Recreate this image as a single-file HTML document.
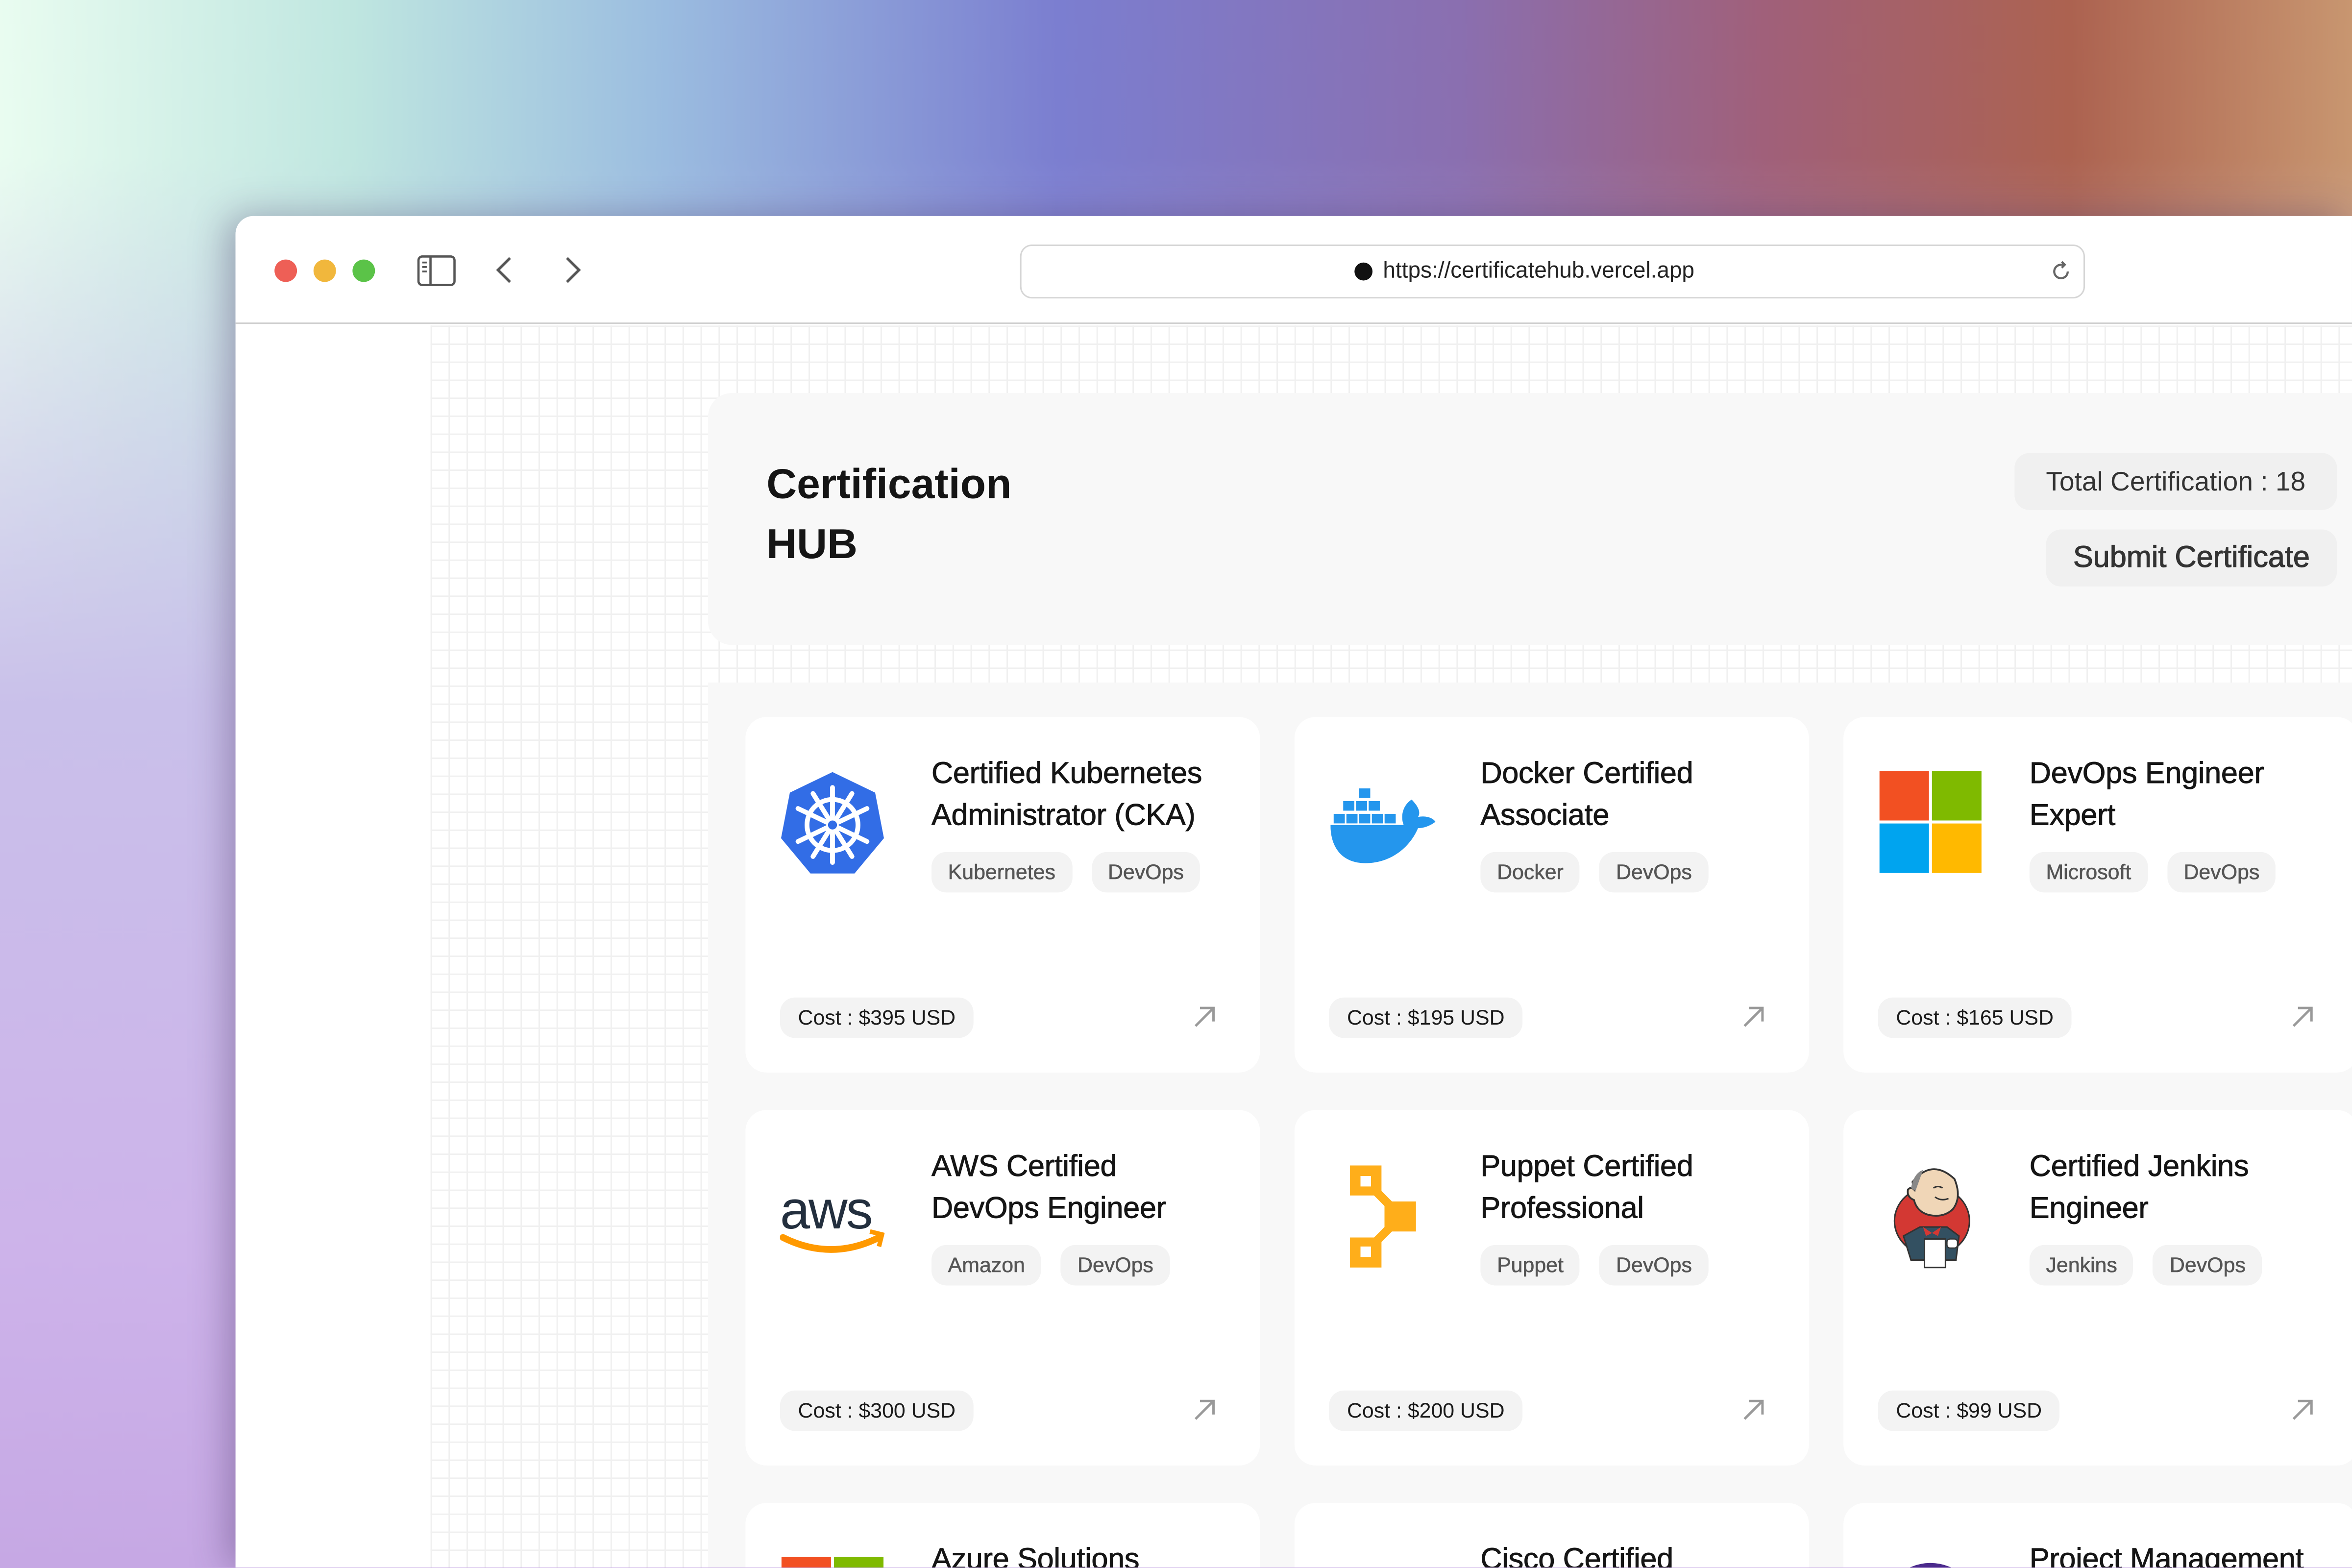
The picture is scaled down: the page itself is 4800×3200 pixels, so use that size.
<!DOCTYPE html>
<html><head><meta charset="utf-8">
<style>
*{margin:0;padding:0;box-sizing:border-box}
html,body{width:4800px;height:3200px;overflow:hidden}
body{position:relative;font-family:"Liberation Sans",sans-serif;
background:linear-gradient(90deg,#e9fcf0 0%,#bfe6e0 15%,#9bbde0 28%,#7b7ed0 45%,#8a6fb0 62%,#a0607a 75%,#ac6250 88%,#c89670 100%);}
#bg2{position:absolute;left:0;top:0;width:4800px;height:3200px;background:linear-gradient(180deg,rgba(0,0,0,0) 0%,rgba(0,0,0,0) 10%,#c9c0ea 45%,#cdb3ea 80%,#c6a8e4 100%);}
#s{position:absolute;left:0;top:0;width:1568px;height:1045px;transform:scale(3.0612);transform-origin:0 0;overflow:hidden}
.win{position:absolute;left:157px;top:144px;width:1411px;height:901px;background:#fff;border-top-left-radius:12px;box-shadow:-6px 0 24px rgba(60,40,90,.35);overflow:hidden}
.tl{position:absolute;top:29px;width:15px;height:15px;border-radius:50%}
.tb{position:absolute;left:0;top:0;width:100%;height:72px;border-bottom:1px solid #cfcfcf;background:#fff}
.url{position:absolute;left:523px;top:19px;width:710px;height:36px;border:1px solid #d6d6d6;border-radius:8px;font-size:15px;color:#222}
.grid{position:absolute;left:130px;top:73px;width:1300px;height:900px;background-color:#fff;
background-image:linear-gradient(#f0f0f0 1px,transparent 1px),linear-gradient(90deg,#f0f0f0 1px,transparent 1px);background-size:12px 12px}
.hdr{position:absolute;left:315px;top:118px;width:1200px;height:168px;background:#f8f8f8;border-radius:16px}
.area{position:absolute;left:315px;top:311px;width:1200px;height:700px;background:#f8f8f8}
.card{position:absolute;width:343px;height:237px;background:#fff;border-radius:14px}
.logo{position:absolute;left:23px;top:35px;width:70px;height:70px}
.t{position:absolute;left:124px;top:24px;font-size:20px;line-height:28px;color:#151515;letter-spacing:-.1px;-webkit-text-stroke:.3px #151515}
.tags{position:absolute;left:124px;top:90px;display:flex;gap:13px}
.tag{background:#f3f3f3;border-radius:10px;height:27px;line-height:27px;padding:0 11px;font-size:14px;color:#555;-webkit-text-stroke:.2px #555}
.cost{position:absolute;left:23px;top:187px;height:27px;line-height:27px;background:#f3f3f3;border-radius:10px;padding:0 12px;font-size:14px;color:#1a1a1a}
.arr{position:absolute;left:298px;top:192px;width:16px;height:16px}
</style></head><body>
<div id="bg2"></div>
<div id="s">
<div class="win">
 <div class="grid"></div>
 <div class="hdr">
  <div style="position:absolute;left:39px;top:41px;font-size:28px;line-height:40px;font-weight:bold;color:#151515">Certification<br>HUB</div>
 </div>
 <div style="position:absolute;left:1186px;top:158px;height:38px;line-height:38px;background:#f0f0f0;border-radius:10px;font-size:18px;color:#333;width:215px;text-align:center">Total Certification : 18</div>
 <div style="position:absolute;left:1207px;top:209px;height:38px;line-height:38px;width:194px;background:#f0f0f0;border-radius:10px;font-size:20px;color:#333;text-align:center;-webkit-text-stroke:.4px #333">Submit Certificate</div>
 <div class="area"></div>

 <!-- row1 -->
 <div class="card" style="left:340px;top:334px">
  <svg class="logo" viewBox="0 0 70 70"><polygon points="35,1 64,15 70,46 50,70 20,70 0,46 6,15" fill="#326de6" transform="translate(35 36) scale(.98) translate(-35 -36)"/>
  <g stroke="#fff" stroke-width="3.2" fill="none" stroke-linecap="round"><circle cx="35" cy="37" r="17"/>
  <line x1="35" y1="12" x2="35" y2="62"/><line x1="12" y1="26" x2="58" y2="48"/><line x1="58" y1="26" x2="12" y2="48"/><line x1="22" y1="58" x2="48" y2="16"/><line x1="48" y1="58" x2="22" y2="16"/></g><circle cx="35" cy="37" r="3" fill="#326de6"/></svg>
  <div class="t">Certified Kubernetes<br>Administrator (CKA)</div>
  <div class="tags"><div class="tag">Kubernetes</div><div class="tag">DevOps</div></div>
  <div class="cost">Cost : $395 USD</div>
  <svg class="arr" viewBox="0 0 16 16"><path d="M2 14L14 2M5 2h9v9" stroke="#999" stroke-width="1.6" fill="none"/></svg>
 </div>
 <div class="card" style="left:706px;top:334px">
  <svg class="logo" viewBox="0 0 66 66" style="left:24px;top:37px"><g fill="#2496ed"><rect x="18" y="10" width="7" height="6"/><rect x="8" y="18" width="7" height="6"/><rect x="16" y="18" width="7" height="6"/><rect x="24" y="18" width="7" height="6"/><rect x="2" y="26" width="7" height="6"/><rect x="10" y="26" width="7" height="6"/><rect x="18" y="26" width="7" height="6"/><rect x="26" y="26" width="7" height="6"/><rect x="34" y="26" width="7" height="6"/>
  <path d="M0 33H46C44 28 45 21 51 17C55 21 57 25 55 28C59 27 64 28 66 31C62 34 58 35 55 35C50 47 38 57 22 57C8 57 0 48 0 33Z"/></g></svg>
  <div class="t">Docker Certified<br>Associate</div>
  <div class="tags"><div class="tag">Docker</div><div class="tag">DevOps</div></div>
  <div class="cost">Cost : $195 USD</div>
  <svg class="arr" viewBox="0 0 16 16"><path d="M2 14L14 2M5 2h9v9" stroke="#999" stroke-width="1.6" fill="none"/></svg>
 </div>
 <div class="card" style="left:1072px;top:334px">
  <svg class="logo" viewBox="0 0 70 70"><rect x="1" y="1" width="33" height="33" fill="#f25022"/><rect x="36" y="1" width="33" height="33" fill="#7fba00"/><rect x="1" y="36" width="33" height="33" fill="#00a4ef"/><rect x="36" y="36" width="33" height="33" fill="#ffb900"/></svg>
  <div class="t">DevOps Engineer<br>Expert</div>
  <div class="tags"><div class="tag">Microsoft</div><div class="tag">DevOps</div></div>
  <div class="cost">Cost : $165 USD</div>
  <svg class="arr" viewBox="0 0 16 16"><path d="M2 14L14 2M5 2h9v9" stroke="#999" stroke-width="1.6" fill="none"/></svg>
 </div>

 <!-- row2 -->
 <div class="card" style="left:340px;top:596px">
  <svg class="logo" viewBox="0 0 70 70"><text x="0" y="44" font-family="Liberation Sans,sans-serif" font-size="36" fill="#232f3e" letter-spacing="-1">aws</text><path d="M2 50Q34 66 66 50" stroke="#ff9900" stroke-width="4.5" fill="none" stroke-linecap="round"/><path d="M60 46L68 48L66 56" stroke="#ff9900" stroke-width="3" fill="none"/></svg>
  <div class="t">AWS Certified<br>DevOps Engineer</div>
  <div class="tags"><div class="tag">Amazon</div><div class="tag">DevOps</div></div>
  <div class="cost">Cost : $300 USD</div>
  <svg class="arr" viewBox="0 0 16 16"><path d="M2 14L14 2M5 2h9v9" stroke="#999" stroke-width="1.6" fill="none"/></svg>
 </div>
 <div class="card" style="left:706px;top:596px">
  <svg class="logo" viewBox="0 0 70 70" style="top:36px"><path fill="#ffae1a" fill-rule="evenodd" d="M14 1H35V18L42 25H58V45H42L35 52V69H14V49H30L37 42V28L30 21H14Z M21 8V15H28V8Z M21 55V62H28V55Z"/></svg>
  <div class="t">Puppet Certified<br>Professional</div>
  <div class="tags"><div class="tag">Puppet</div><div class="tag">DevOps</div></div>
  <div class="cost">Cost : $200 USD</div>
  <svg class="arr" viewBox="0 0 16 16"><path d="M2 14L14 2M5 2h9v9" stroke="#999" stroke-width="1.6" fill="none"/></svg>
 </div>
 <div class="card" style="left:1072px;top:596px">
  <svg class="logo" viewBox="0 0 70 70" style="top:36px">
   <ellipse cx="36" cy="38" rx="25" ry="23" fill="#d33833" stroke="#333" stroke-width="1"/>
   <path d="M17 48L28 42H46L54 48L52 64H22Z" fill="#335061" stroke="#333" stroke-width="1"/>
   <path d="M30 42l6 4 6-4-2 6-4-2-4 2z" fill="#d33833"/>
   <path d="M23 12Q36 -4 51 10Q56 22 50 30Q44 36 34 34Q26 32 24 24Q19 22 20 17Q22 15 24 17Z" fill="#f0d6b7" stroke="#333" stroke-width="1.2"/>
   <path d="M22 16Q24 6 30 4L25 18Z" fill="#888"/>
   <path d="M38 22Q42 25 47 23M37 16Q40 14 43 16" stroke="#333" stroke-width="1" fill="none"/>
   <rect x="31" y="50" width="14" height="19" fill="#fff" stroke="#333" stroke-width="1"/>
   <rect x="46" y="50" width="7" height="6" rx="2" fill="#fff" stroke="#333" stroke-width=".8"/>
  </svg>
  <div class="t">Certified Jenkins<br>Engineer</div>
  <div class="tags"><div class="tag">Jenkins</div><div class="tag">DevOps</div></div>
  <div class="cost">Cost : $99 USD</div>
  <svg class="arr" viewBox="0 0 16 16"><path d="M2 14L14 2M5 2h9v9" stroke="#999" stroke-width="1.6" fill="none"/></svg>
 </div>

 <!-- row3 -->
 <div class="card" style="left:340px;top:858px">
  <svg class="logo" viewBox="0 0 70 70"><rect x="1" y="1" width="33" height="33" fill="#f25022"/><rect x="36" y="1" width="33" height="33" fill="#7fba00"/></svg>
  <div class="t">Azure Solutions</div>
 </div>
 <div class="card" style="left:706px;top:858px"><div class="t">Cisco Certified</div></div>
 <div class="card" style="left:1072px;top:858px">
  <svg class="logo" viewBox="0 0 70 70"><circle cx="35" cy="38" r="30" stroke="#4b2a8c" stroke-width="6" fill="none"/></svg>
  <div class="t">Project Management</div>
 </div>

 <div class="tb">
  <div class="tl" style="left:26px;background:#ee5f56"></div>
  <div class="tl" style="left:52px;background:#f1b73c"></div>
  <div class="tl" style="left:78px;background:#5bc348"></div>
  <svg style="position:absolute;left:121px;top:26px" width="26" height="21" viewBox="0 0 26 21"><rect x="1" y="1" width="24" height="19" rx="2.5" fill="none" stroke="#555" stroke-width="1.5"/><line x1="9" y1="1" x2="9" y2="20" stroke="#555" stroke-width="1.5"/><g stroke="#555" stroke-width="1.2"><line x1="3.5" y1="5" x2="6.5" y2="5"/><line x1="3.5" y1="8" x2="6.5" y2="8"/><line x1="3.5" y1="11" x2="6.5" y2="11"/></g></svg>
  <svg style="position:absolute;left:172px;top:26px" width="14" height="20" viewBox="0 0 14 20"><path d="M11 2L3 10l8 8" stroke="#555" stroke-width="1.8" fill="none"/></svg>
  <svg style="position:absolute;left:218px;top:26px" width="14" height="20" viewBox="0 0 14 20"><path d="M3 2l8 8-8 8" stroke="#555" stroke-width="1.8" fill="none"/></svg>
  <div class="url">
   <div style="position:absolute;left:222px;top:11px;width:12px;height:12px;border-radius:50%;background:#111"></div>
   <div style="position:absolute;left:241px;top:8px;line-height:18px">https://certificatehub.vercel.app</div>
   <svg style="position:absolute;left:685px;top:9px" width="16" height="16" viewBox="0 0 16 16"><path d="M12.5 8A4.5 4.5 0 1 1 8 3.5h2" stroke="#666" stroke-width="1.4" fill="none"/><path d="M8.5 1.5L10.5 3.5 8.5 5.5" stroke="#666" stroke-width="1.4" fill="none"/></svg>
  </div>
 </div>
</div>
</div>
</body></html>
